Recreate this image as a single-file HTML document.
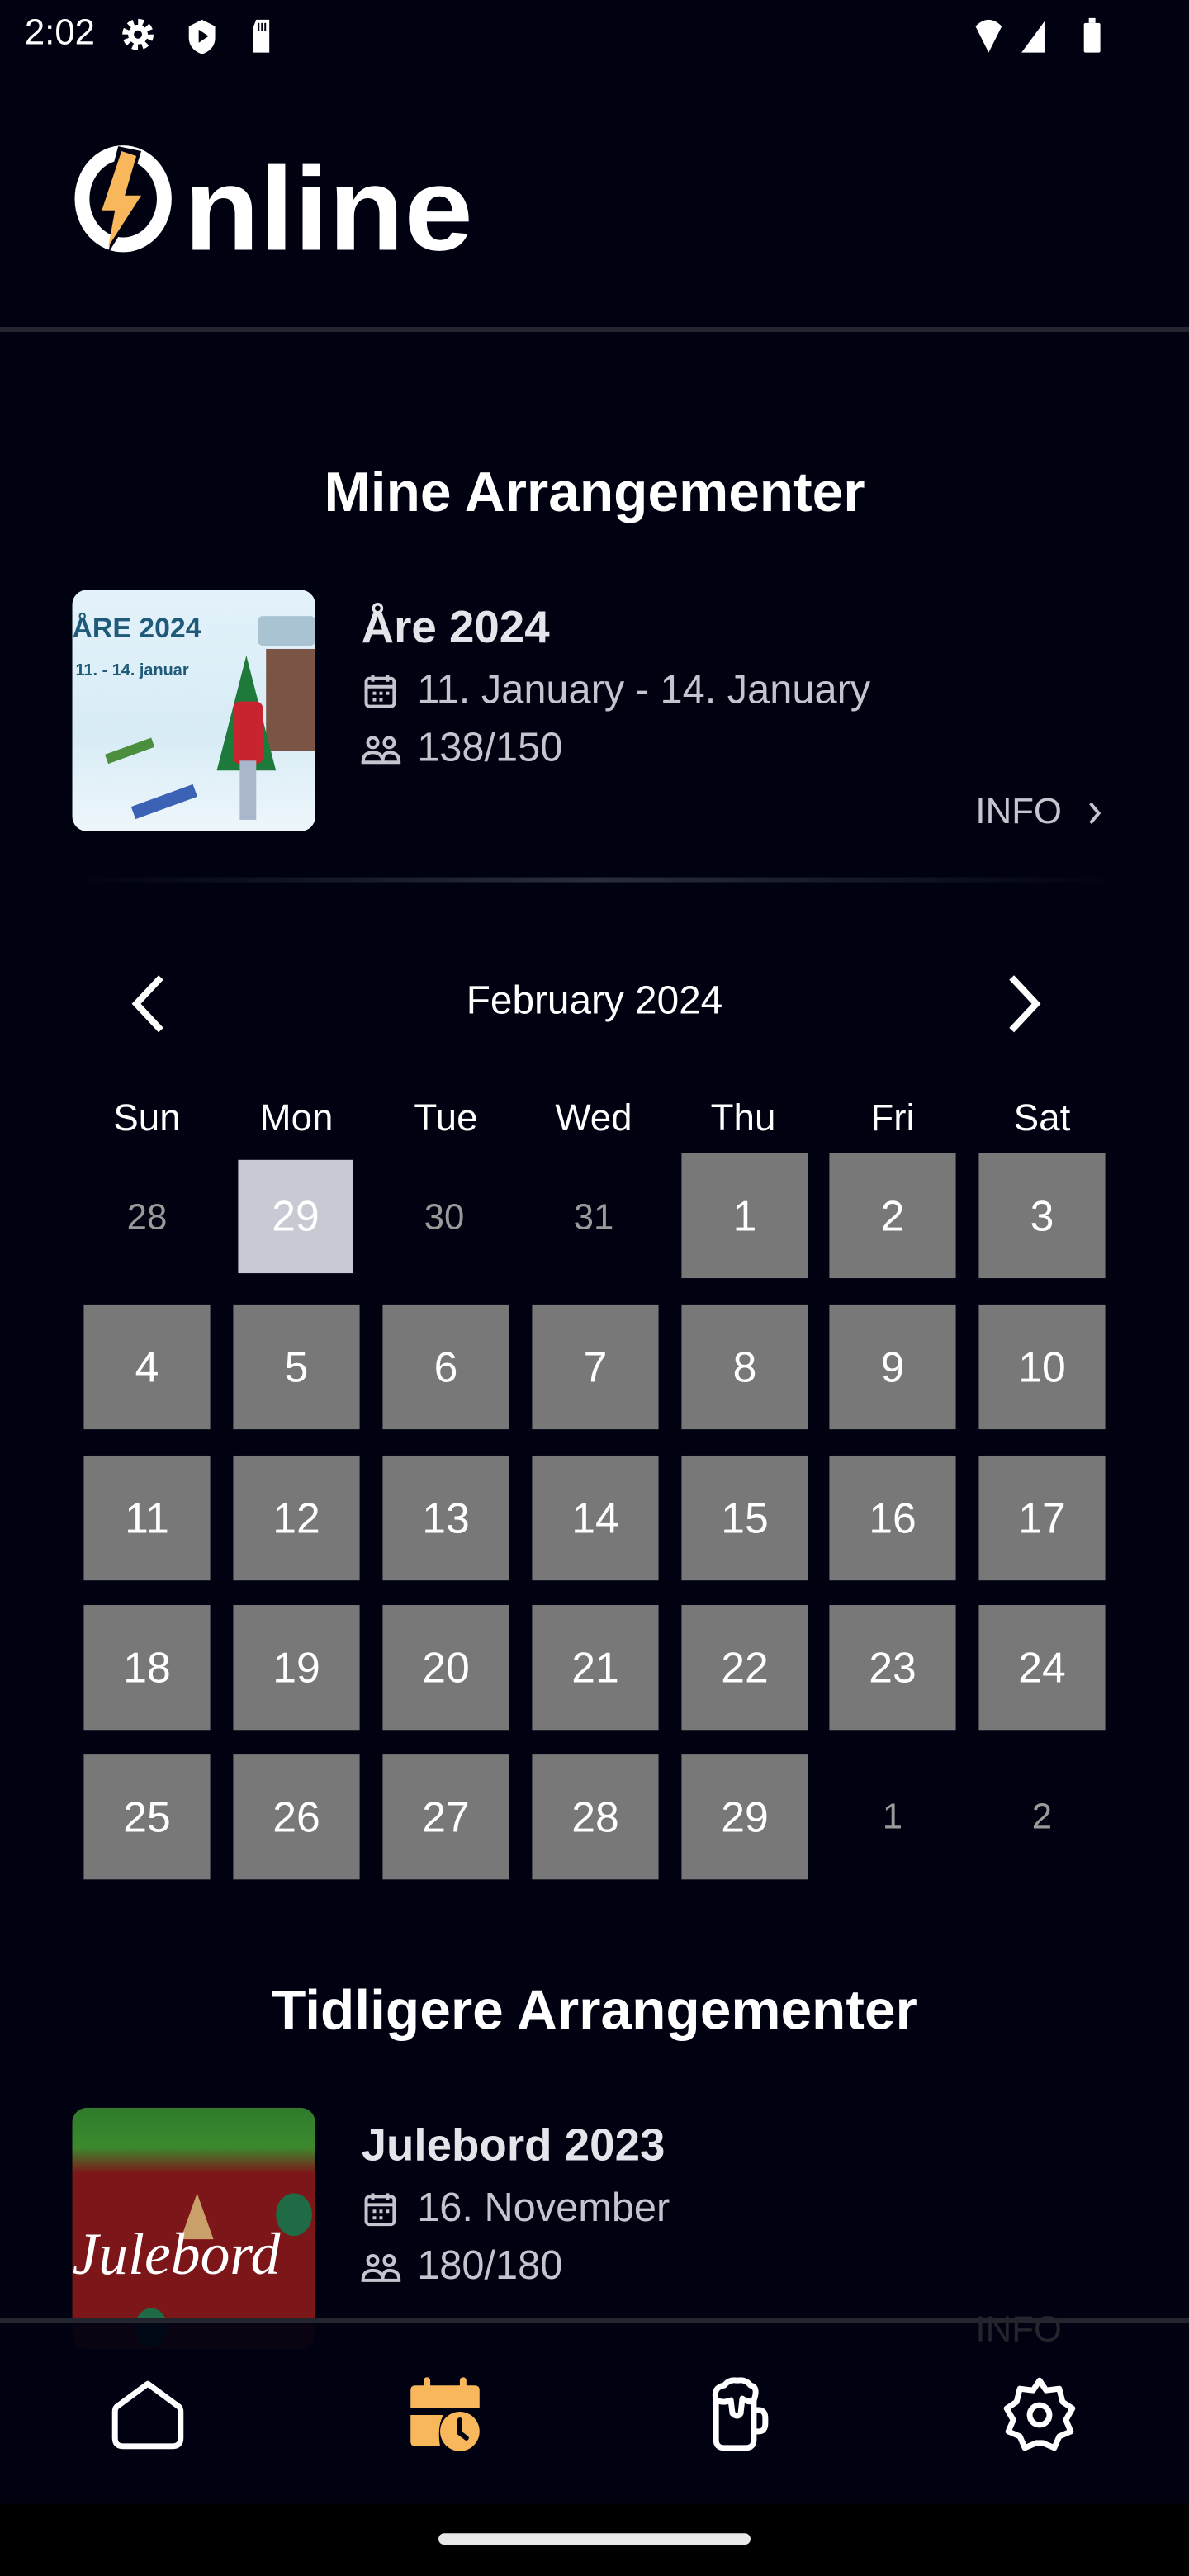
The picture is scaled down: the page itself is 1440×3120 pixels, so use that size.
<!DOCTYPE html>
<html><head><meta charset="utf-8">
<style>
html,body{margin:0;padding:0;background:#000212;width:1440px;height:3120px;overflow:hidden}
#s{position:absolute;left:0;top:0;width:724px;height:1568px;transform:scale(1.98895,1.98980);transform-origin:0 0;background:#000212;font-family:"Liberation Sans",sans-serif;color:#fff}
.a{position:absolute}
.h{font-weight:bold;font-size:34px;text-align:center;width:724px;left:0}
.cell{position:absolute;width:77px;height:76px;background:#787878;color:#fff;font-size:26px;display:flex;align-items:center;justify-content:center}
.pl{position:absolute;width:77px;height:76px;color:#9a9a9a;font-size:22px;display:flex;align-items:center;justify-content:center}
.dn{position:absolute;width:91px;text-align:center;font-size:23px;top:667px}
.t{font-weight:bold;font-size:27.5px;color:#e4e5ea}
.m{font-size:24.5px;color:#c3c5cf}
</style></head><body><div id="s">
<!-- status bar -->
<div class="a" style="left:15px;top:7px;font-size:22px">2:02</div>
<svg class="a" style="left:72px;top:10px" width="100" height="24" viewBox="0 0 100 24">
<circle cx="12" cy="11" r="7" fill="none" stroke="#fff" stroke-width="5" stroke-dasharray="3 2.5"/><circle cx="12" cy="11" r="6" fill="#fff"/><circle cx="12" cy="11" r="2.5" fill="#000212"/>
<path d="M51 2 L59 6 L59 13 Q59 20 51 23 Q43 20 43 13 L43 6Z" fill="#fff"/><path d="M49 8 L55 12 L49 16Z" fill="#000212"/>
<path d="M84 2 L92 2 L92 22 L82 22 L82 7Z" fill="#fff"/><rect x="85" y="4" width="1" height="5" fill="#000212"/><rect x="87" y="4" width="1" height="5" fill="#000212"/><rect x="89" y="4" width="1" height="5" fill="#000212"/>
</svg>
<svg class="a" style="left:592px;top:10px" width="90" height="24" viewBox="0 0 90 24">
<path d="M2 6 Q10 -2 18 6 L10 22Z" fill="#fff"/><path d="M30 22 L44 22 L44 3Z" fill="#fff"/><rect x="68" y="4" width="10" height="18" rx="1" fill="#fff"/><rect x="71" y="1" width="4" height="3" fill="#fff"/>
</svg>
<!-- logo -->
<svg class="a" style="left:44px;top:88px" width="250" height="68" viewBox="0 0 250 68">
<ellipse cx="31" cy="33" rx="25" ry="28" fill="none" stroke="#fff" stroke-width="9"/>
<path d="M28 1 L42 4 L34 30 L44 30 L22 66 L26 42 L17 42Z" fill="#000212"/>
<path d="M30 4 L39 7 L32 31 L42 31 L22 62 L26 40 L18 40Z" fill="#f9b75c"/>
<text x="68" y="64" font-family="Liberation Sans" font-weight="bold" font-size="72" fill="#fff" textLength="176" lengthAdjust="spacingAndGlyphs">nline</text>
</svg>
<div class="a" style="left:0;top:199px;width:724px;height:3px;background:#23252f"></div>
<div class="a h" style="top:281px">Mine Arrangementer</div>
<!-- event 1 -->
<div class="a" style="left:44px;top:359px;width:148px;height:147px;border-radius:9px;overflow:hidden;background:linear-gradient(180deg,#e3f2fb 0%,#d8ecf6 60%,#eef6fb 100%)">
<div class="a" style="left:0;top:14px;font-size:17px;font-weight:bold;color:#1f5a78">ÅRE 2024</div>
<div class="a" style="left:2px;top:44px;font-size:10px;font-weight:bold;color:#1f5a78">11. - 14. januar</div>
<div class="a" style="left:113px;top:16px;width:35px;height:18px;background:#a9c3d2;border-radius:3px"></div>
<div class="a" style="left:118px;top:36px;width:30px;height:62px;background:#7a5546"></div>
<div class="a" style="left:88px;top:40px;width:0;height:0;border-left:18px solid transparent;border-right:18px solid transparent;border-bottom:70px solid #1e7a3a"></div>
<div class="a" style="left:98px;top:68px;width:18px;height:38px;background:#c8242f;border-radius:4px"></div>
<div class="a" style="left:102px;top:104px;width:10px;height:36px;background:#a9b6cc"></div>
<div class="a" style="left:20px;top:95px;width:30px;height:6px;background:#4b8e3e;transform:rotate(-20deg)"></div>
<div class="a" style="left:36px;top:125px;width:40px;height:8px;background:#3c62b5;transform:rotate(-20deg)"></div>
</div>
<div class="a t" style="left:220px;top:366px">Åre 2024</div>
<svg class="a" style="left:221px;top:410px" width="22" height="22" viewBox="0 0 22 22"><rect x="2" y="3" width="17" height="17" rx="2" fill="none" stroke="#c3c5cf" stroke-width="2"/><path d="M2 8H19M6 1V5M15 1V5" stroke="#c3c5cf" stroke-width="2"/><g fill="#c3c5cf"><rect x="6" y="11" width="2" height="2"/><rect x="10" y="11" width="2" height="2"/><rect x="14" y="11" width="2" height="2"/><rect x="6" y="15" width="2" height="2"/><rect x="10" y="15" width="2" height="2"/></g></svg>
<div class="a m" style="left:254px;top:407px">11. January - 14. January</div>
<svg class="a" style="left:220px;top:447px" width="24" height="20" viewBox="0 0 24 20"><g fill="none" stroke="#c3c5cf" stroke-width="2"><circle cx="7" cy="5" r="3"/><circle cx="17" cy="5" r="3"/><path d="M1 17Q1 11 7 11Q13 11 13 17ZM13 17Q13 11 17 11Q23 11 23 17Z"/></g></svg>
<div class="a m" style="left:254px;top:442px">138/150</div>
<div class="a m" style="left:594px;top:481px;font-size:22px">INFO</div>
<svg class="a" style="left:660px;top:487px" width="12" height="16" viewBox="0 0 12 16"><path d="M4 2L9 8L4 14" fill="none" stroke="#c3c5cf" stroke-width="2"/></svg>
<div class="a" style="left:44px;top:534px;width:636px;height:3px;background:linear-gradient(90deg,rgba(40,43,56,0),#2a2d3a 50%,rgba(40,43,56,0))"></div>
<!-- calendar -->
<svg class="a" style="left:76px;top:592px" width="28" height="38" viewBox="0 0 28 38"><path d="M22 3L7 19L22 35" fill="none" stroke="#fff" stroke-width="4"/></svg>
<svg class="a" style="left:610px;top:592px" width="28" height="38" viewBox="0 0 28 38"><path d="M6 3L21 19L6 35" fill="none" stroke="#fff" stroke-width="4"/></svg>
<div class="a" style="left:0;top:596px;width:724px;text-align:center;font-size:24px">February 2024</div>
<div class="dn" style="left:44px">Sun</div><div class="dn" style="left:135px">Mon</div><div class="dn" style="left:226px">Tue</div><div class="dn" style="left:316px">Wed</div><div class="dn" style="left:407px">Thu</div><div class="dn" style="left:498px">Fri</div><div class="dn" style="left:589px">Sat</div>
<div class="pl" style="left:51px;top:703px">28</div>
<div class="a" style="left:145px;top:706px;width:70px;height:69px;background:#c8cad3;color:#fff;font-size:26px;display:flex;align-items:center;justify-content:center">29</div>
<div class="pl" style="left:232px;top:703px">30</div>
<div class="pl" style="left:323px;top:703px">31</div>
<div class="cell" style="left:415px;top:702px">1</div><div class="cell" style="left:505px;top:702px">2</div><div class="cell" style="left:596px;top:702px">3</div>
<div class="cell" style="left:51px;top:794px">4</div><div class="cell" style="left:142px;top:794px">5</div><div class="cell" style="left:233px;top:794px">6</div><div class="cell" style="left:324px;top:794px">7</div><div class="cell" style="left:415px;top:794px">8</div><div class="cell" style="left:505px;top:794px">9</div><div class="cell" style="left:596px;top:794px">10</div>
<div class="cell" style="left:51px;top:886px">11</div><div class="cell" style="left:142px;top:886px">12</div><div class="cell" style="left:233px;top:886px">13</div><div class="cell" style="left:324px;top:886px">14</div><div class="cell" style="left:415px;top:886px">15</div><div class="cell" style="left:505px;top:886px">16</div><div class="cell" style="left:596px;top:886px">17</div>
<div class="cell" style="left:51px;top:977px">18</div><div class="cell" style="left:142px;top:977px">19</div><div class="cell" style="left:233px;top:977px">20</div><div class="cell" style="left:324px;top:977px">21</div><div class="cell" style="left:415px;top:977px">22</div><div class="cell" style="left:505px;top:977px">23</div><div class="cell" style="left:596px;top:977px">24</div>
<div class="cell" style="left:51px;top:1068px">25</div><div class="cell" style="left:142px;top:1068px">26</div><div class="cell" style="left:233px;top:1068px">27</div><div class="cell" style="left:324px;top:1068px">28</div><div class="cell" style="left:415px;top:1068px">29</div>
<div class="pl" style="left:505px;top:1068px">1</div><div class="pl" style="left:596px;top:1068px">2</div>
<div class="a h" style="top:1205px">Tidligere Arrangementer</div>
<!-- event 2 -->
<div class="a" style="left:44px;top:1283px;width:148px;height:147px;border-radius:9px;overflow:hidden;background:#7c1618">
<div class="a" style="left:0;top:0;width:148px;height:40px;background:linear-gradient(180deg,#2f7a2a,#3b8a2e 60%,rgba(124,22,24,0))"></div>
<div class="a" style="left:66px;top:52px;width:0;height:0;border-left:10px solid transparent;border-right:10px solid transparent;border-bottom:28px solid #c9a06a"></div>
<div class="a" style="left:124px;top:52px;width:22px;height:26px;border-radius:50%;background:#1e6b45"></div>
<div class="a" style="left:0;top:68px;font-family:'Liberation Serif',serif;font-style:italic;font-size:36px;color:#fff">Julebord</div>
<div class="a" style="left:38px;top:122px;width:20px;height:24px;border-radius:50%;background:#1e6b45"></div>
</div>
<div class="a t" style="left:220px;top:1290px">Julebord 2023</div>
<svg class="a" style="left:221px;top:1334px" width="22" height="22" viewBox="0 0 22 22"><rect x="2" y="3" width="17" height="17" rx="2" fill="none" stroke="#c3c5cf" stroke-width="2"/><path d="M2 8H19M6 1V5M15 1V5" stroke="#c3c5cf" stroke-width="2"/><g fill="#c3c5cf"><rect x="6" y="11" width="2" height="2"/><rect x="10" y="11" width="2" height="2"/><rect x="14" y="11" width="2" height="2"/><rect x="6" y="15" width="2" height="2"/><rect x="10" y="15" width="2" height="2"/></g></svg>
<div class="a m" style="left:254px;top:1331px">16. November</div>
<svg class="a" style="left:220px;top:1371px" width="24" height="20" viewBox="0 0 24 20"><g fill="none" stroke="#c3c5cf" stroke-width="2"><circle cx="7" cy="5" r="3"/><circle cx="17" cy="5" r="3"/><path d="M1 17Q1 11 7 11Q13 11 13 17ZM13 17Q13 11 17 11Q23 11 23 17Z"/></g></svg>
<div class="a m" style="left:254px;top:1366px">180/180</div>
<!-- bottom nav -->
<div class="a" style="left:0;top:1411px;width:724px;height:113px;background:rgba(0,2,18,0.93);border-top:3px solid #23252f"></div>
<div class="a" style="left:594px;top:1405px;font-size:22px;color:#23252c">INFO</div>
<svg class="a" style="left:66px;top:1448px" width="48" height="44" viewBox="0 0 48 44"><path d="M24 3L5 17Q4 18 4 20V36Q4 41 9 41H39Q44 41 44 36V20Q44 18 43 17Z" fill="none" stroke="#fff" stroke-width="3.5" stroke-linejoin="round"/></svg>
<svg class="a" style="left:246px;top:1447px" width="50" height="46" viewBox="0 0 50 46"><path d="M4 8Q4 5 7 5H43Q46 5 46 8V19H4Z" fill="#f9b75c"/><rect x="12" y="0" width="4" height="8" rx="2" fill="#f9b75c"/><rect x="34" y="0" width="4" height="8" rx="2" fill="#f9b75c"/><path d="M4 23H24Q20 30 22 42H7Q4 42 4 39Z" fill="#f9b75c"/><circle cx="34" cy="33" r="12" fill="#f9b75c"/><path d="M34 26V34L38 37" fill="none" stroke="#000212" stroke-width="3" stroke-linecap="round"/></svg>
<svg class="a" style="left:429px;top:1447px" width="46" height="46" viewBox="0 0 46 46"><path d="M7 14V38Q7 43 12 43H25Q30 43 30 38V14" fill="none" stroke="#fff" stroke-width="3.5"/><path d="M30 20H33Q37 20 37 25V28Q37 33 33 33H30" fill="none" stroke="#fff" stroke-width="3.5"/><path d="M7 14Q5 6 12 5Q15 1 20 2Q25 1 28 5Q33 6 30 14Q27 16 23 13L22 22Q20 25 17 22L16 14Q12 16 7 14Z" fill="none" stroke="#fff" stroke-width="3.5" stroke-linejoin="round"/></svg>
<svg class="a" style="left:610px;top:1446px" width="46" height="48" viewBox="0 0 46 48"><path d="M23 3L27 9L35 8L37 16L43 20L39 27L42 34L35 37L32 44L25 41L21 41L14 44L11 37L4 34L7 27L3 20L9 16L11 8L19 9Z" fill="none" stroke="#fff" stroke-width="3.5" stroke-linejoin="round"/><circle cx="23" cy="24" r="6" fill="none" stroke="#fff" stroke-width="3.5"/></svg>
<div class="a" style="left:0;top:1524px;width:724px;height:44px;background:#000"></div>
<div class="a" style="left:267px;top:1542px;width:190px;height:7px;border-radius:4px;background:#e8e8e8"></div>
</div></body></html>
